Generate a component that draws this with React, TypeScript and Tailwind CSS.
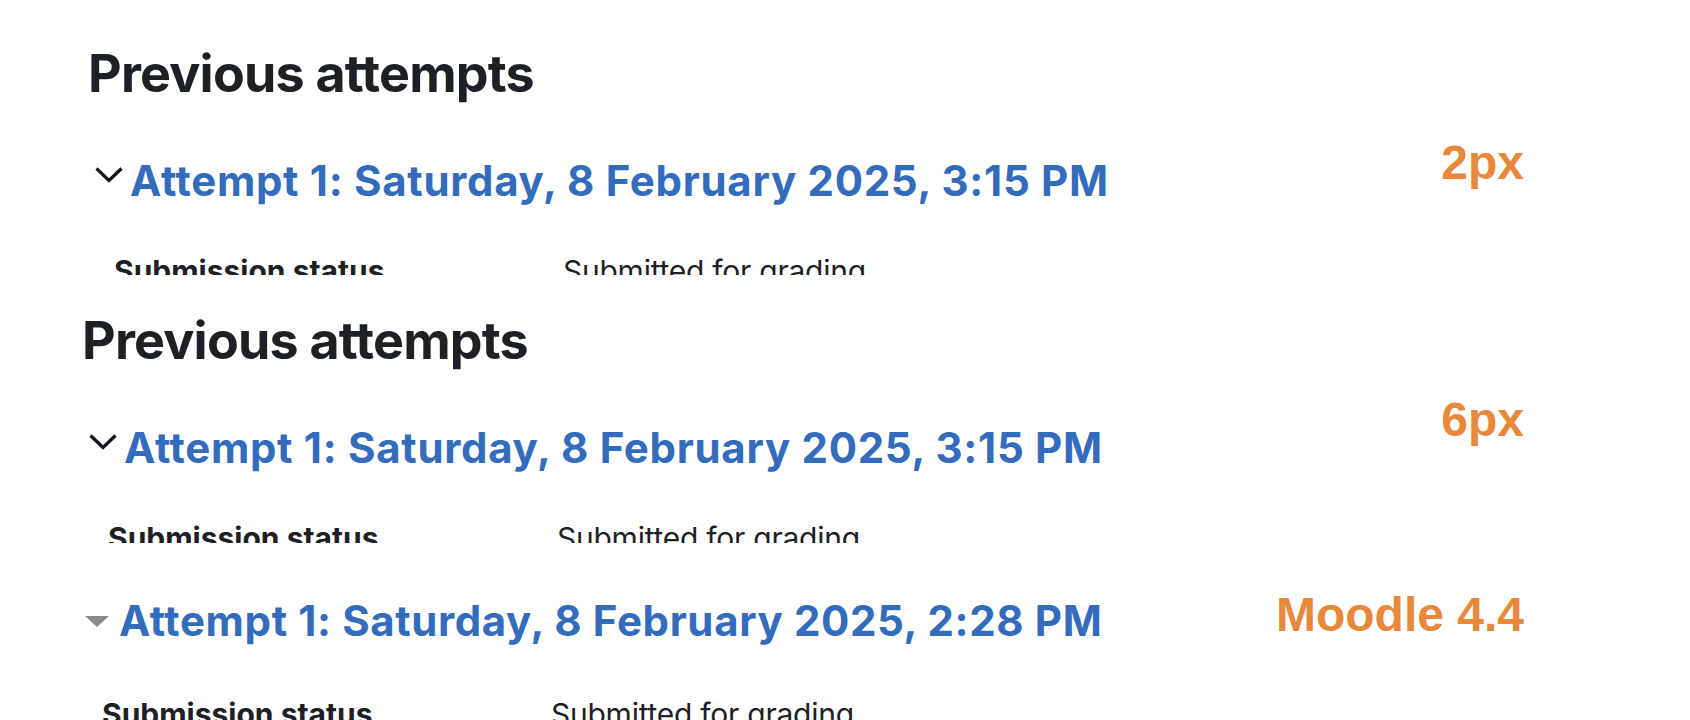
import React from "react";

function Chevron() {
  return (
    <svg width="28" height="16" viewBox="0 0 28 16" className="block shrink-0">
      <polyline points="1.5,1.5 14,13.5 26.5,1.5" fill="none" stroke="#111418" strokeWidth="3.2" />
    </svg>
  );
}

function Triangle() {
  return (
    <svg width="24" height="11" viewBox="0 0 24 11" className="block shrink-0">
      <polygon points="0,0 24,0 12,11" fill="#8c8c8c" />
    </svg>
  );
}

const title = "Attempt 1: Saturday, 8 February 2025, 3:15 PM";

export default function App() {
  return (
    <div className="w-[1690px] h-[720px] bg-white overflow-hidden font-[Inter,sans-serif] text-[#1d2125]">
      {/* Section 1 */}
      <section className="relative h-[275px] overflow-hidden pt-[43px]">
        <h3 className="pl-[88px] text-[52px] leading-[62px] font-bold tracking-[-0.8px]">Previous attempts</h3>
        <div className="mt-[51px] flex items-start pl-[95px]">
          <div className="mt-[11px]">
            <Chevron />
          </div>
          <a className="ml-[7px] text-[42px] leading-[50px] font-bold text-[#336cbd] whitespace-nowrap tracking-[0.7px]">
            {title}
          </a>
        </div>
        <div className="mt-[47px] flex pl-[114px] text-[30px] leading-[36px] whitespace-nowrap">
          <div className="w-[449px] font-bold">Submission status</div>
          <div className="tracking-[-0.25px]">Submitted for grading</div>
        </div>
        <div className="absolute right-[166px] top-[139px] font-['Liberation_Sans',Arial,sans-serif] text-[48px] leading-[48px] font-bold text-[#e8883a]">
          2px
        </div>
      </section>

      {/* Section 2 */}
      <section className="relative h-[268px] overflow-hidden pt-[35px]">
        <h3 className="pl-[82px] text-[52px] leading-[62px] font-bold tracking-[-0.8px]">Previous attempts</h3>
        <div className="mt-[51px] flex items-start pl-[89px]">
          <div className="mt-[11px]">
            <Chevron />
          </div>
          <a className="ml-[7px] text-[42px] leading-[50px] font-bold text-[#336cbd] whitespace-nowrap tracking-[0.7px]">
            {title}
          </a>
        </div>
        <div className="mt-[47px] flex pl-[108px] text-[30px] leading-[36px] whitespace-nowrap">
          <div className="w-[449px] font-bold">Submission status</div>
          <div className="tracking-[-0.25px]">Submitted for grading</div>
        </div>
        <div className="absolute right-[166px] top-[121px] font-['Liberation_Sans',Arial,sans-serif] text-[48px] leading-[48px] font-bold text-[#e8883a]">
          6px
        </div>
      </section>

      {/* Section 3 */}
      <section className="relative h-[177px] overflow-hidden pt-[53px]">
        <div className="flex items-start pl-[85px]">
          <div className="mt-[20px]">
            <Triangle />
          </div>
          <a className="ml-[10px] text-[42px] leading-[50px] font-bold text-[#336cbd] whitespace-nowrap tracking-[0.62px]">
            Attempt 1: Saturday, 8 February 2025, 2:28 PM
          </a>
        </div>
        <div className="mt-[50px] flex pl-[102px] text-[30px] leading-[36px] whitespace-nowrap">
          <div className="w-[449px] font-bold">Submission status</div>
          <div className="tracking-[-0.25px]">Submitted for grading</div>
        </div>
        <div className="absolute right-[166px] top-[48px] font-['Liberation_Sans',Arial,sans-serif] text-[48px] leading-[48px] font-bold text-[#e8883a]">
          Moodle 4.4
        </div>
      </section>
    </div>
  );
}
